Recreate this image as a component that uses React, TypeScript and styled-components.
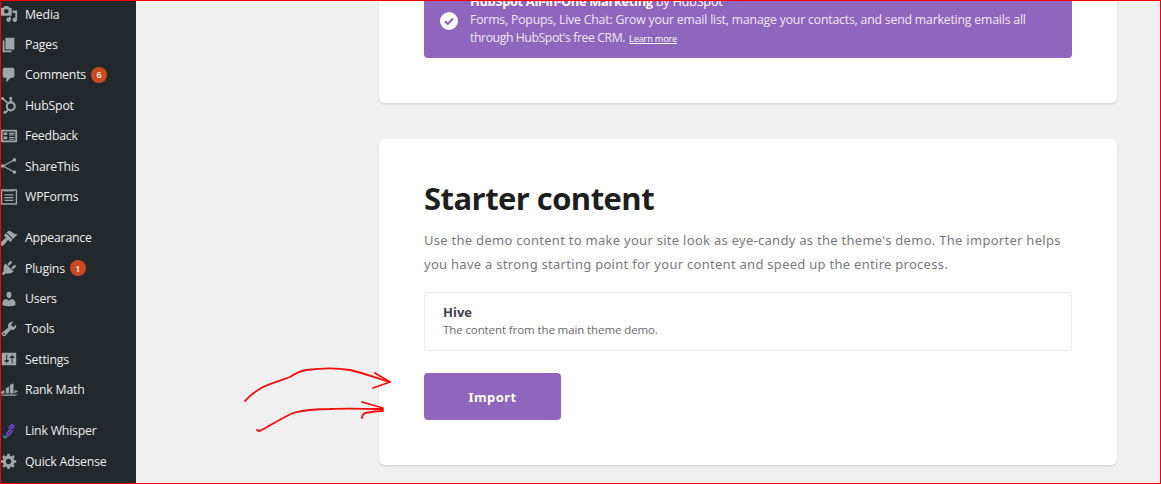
import React from "react";
import styled, { createGlobalStyle } from "styled-components";

const Global = createGlobalStyle`
  html, body { margin: 0; padding: 0; background: #f0f0f0; }
  * { box-sizing: border-box; }
`;

const Shell = styled.div`
  position: relative;
  display: flex;
  width: 1161px;
  height: 484px;
  overflow: hidden;
  background: #f0f0f0;
  font-family: "Open Sans", "Noto Sans", sans-serif;
`;

const Sidebar = styled.nav`
  flex: 0 0 136px;
  height: 484px;
  background: #23282d;
  overflow: hidden;
`;

const MenuList = styled.ul`
  list-style: none;
  margin: -1px 0 0;
  padding: 0;
`;

const MenuItem = styled.li<{ $gap?: boolean }>`
  display: flex;
  align-items: center;
  height: 30.4px;
  margin-top: ${(p) => (p.$gap ? "10.8px" : "0")};
  padding-left: 0;
  color: #eeeeee;
  font-size: 12.3px;
  letter-spacing: -0.2px;
  white-space: nowrap;
`;

const IconSlot = styled.span`
  flex: 0 0 24px;
  display: flex;
  align-items: center;
  justify-content: center;
  padding-right: 7px;
  color: #a0a5aa;
  svg { width: 18px; height: 18px; display: block; flex: none; fill: currentColor; }
`;

const Badge = styled.span`
  display: inline-flex;
  align-items: center;
  justify-content: center;
  width: 16px;
  height: 16px;
  margin-left: 5px;
  border-radius: 50%;
  background: #ca4a1f;
  color: #fff;
  font-size: 9px;
  font-weight: 600;
`;

const Main = styled.main`
  flex: 1;
  padding: 0 44px 0 243px;
`;

const TopCard = styled.section`
  height: 103px;
  padding: 0 45px;
  background: #fff;
  border-radius: 0 0 6px 6px;
  box-shadow: 0 1px 2px rgba(0, 0, 0, 0.14);
`;

const Notice = styled.div`
  display: flex;
  align-items: center;
  gap: 12px;
  height: 58px;
  padding: 0 0 0 16px;
  background: #8f65bd;
  border-radius: 0 0 4px 4px;
  color: #efe8f6;
  font-size: 12.25px;
  line-height: 18.5px;
  overflow: hidden;
`;

const CheckIcon = styled.svg`
  flex: none;
  width: 18px;
  height: 18px;
  margin-top: -17px;
`;

const NoticeText = styled.div`
  flex: 1;
  margin-top: -17px;
  white-space: nowrap;
  letter-spacing: -0.18px;
`;

const NoticeTitle = styled.div`
  color: #fff;
  font-size: 12.8px;
  letter-spacing: -0.3px;
  strong { font-weight: 700; }
`;

const NoticeTight = styled.span`
  letter-spacing: -0.42px;
`;

const LearnMore = styled.a`
  margin-left: 4px;
  color: #fff;
  font-size: 9.2px;
  letter-spacing: -0.18px;
  text-decoration: underline;
`;

const StarterCard = styled.section`
  display: flex;
  flex-direction: column;
  align-items: flex-start;
  height: 326px;
  margin-top: 36px;
  padding: 39px 45px 0;
  background: #fff;
  border-radius: 6px;
  box-shadow: 0 1px 2px rgba(0, 0, 0, 0.14);
`;

const Heading = styled.h2`
  margin: 0;
  color: #1e1e1e;
  font-size: 31px;
  line-height: 40px;
  font-weight: 700;
  letter-spacing: -0.55px;
`;

const Description = styled.p`
  margin: 11px 0 0;
  color: #7b7880;
  font-family: "Noto Sans", "Open Sans", sans-serif;
  font-size: 13px;
  line-height: 23.5px;
  letter-spacing: 0.28px;
  white-space: nowrap;
`;

const ContentBox = styled.div`
  width: 100%;
  height: 59px;
  margin-top: 16px;
  padding: 10px 18px;
  border: 1px solid #ebebeb;
  border-radius: 4px;
  background: #fff;
`;

const BoxTitle = styled.div`
  color: #463d50;
  font-size: 13px;
  line-height: 18px;
  font-weight: 700;
`;

const BoxText = styled.div`
  color: #6c6870;
  font-size: 11.5px;
  line-height: 17px;
  letter-spacing: -0.1px;
`;

const ImportButton = styled.button`
  width: 137px;
  height: 47px;
  margin-top: 22px;
  border: 0;
  border-radius: 4px;
  background: #8f65bd;
  color: #fff;
  font-family: "Noto Sans", "Open Sans", sans-serif;
  font-size: 13px;
  font-weight: 700;
  letter-spacing: 0.4px;
`;

const Annotation = styled.svg`
  position: absolute;
  inset: 0;
  width: 1161px;
  height: 484px;
  pointer-events: none;
`;

const Frame = styled.div`
  position: absolute;
  inset: 0;
  border: 1px solid #f00000;
  pointer-events: none;
`;

const P = ({ d }: { d: string }) => (
  <svg viewBox="0 0 20 20">
    <path d={d} />
  </svg>
);

const HubSpotIcon = () => (
  <svg viewBox="0 0 20 20">
    <circle cx="12" cy="11.5" r="4.4" fill="none" stroke="currentColor" strokeWidth="2.4" />
    <path d="M11 2.5h2v5h-2zM2.2 3.4l1.2-1.5 6.2 5.2-1.4 1.6zM8.5 14.5l1.5 1.4-3 3-1.5-1.4z" />
    <circle cx="2.8" cy="2.8" r="1.6" />
    <circle cx="12" cy="2.4" r="1.5" />
    <circle cx="5.5" cy="18" r="1.7" />
  </svg>
);

const FeedbackIcon = () => (
  <svg viewBox="0 0 20 20">
    <path
      fillRule="evenodd"
      d="M2 3h16a1 1 0 0 1 1 1v12a1 1 0 0 1-1 1H2a1 1 0 0 1-1-1V4a1 1 0 0 1 1-1zm1 2v10h14V5H3zm1 1h4v3H4zm0 4.5h4v3.2H4zm6-4.2h6v1.4h-6zm0 2h6v1.2h-6zm0 2.7h6v1.3h-6zm0 2h6v1.2h-6z"
    />
  </svg>
);

const ShareIcon = () => (
  <svg viewBox="0 0 20 20">
    <path d="M16 3 3.5 10 16 17" fill="none" stroke="currentColor" strokeWidth="1.4" />
    <circle cx="16" cy="3.2" r="2" />
    <circle cx="3" cy="10" r="2" />
    <circle cx="16" cy="16.8" r="2" />
  </svg>
);

const WPFormsIcon = () => (
  <svg viewBox="0 0 20 20">
    <path
      fillRule="evenodd"
      d="M2 1.500h16a1 1 0 0 1 1 1v15a1 1 0 0 1-1 1H2a1 1 0 0 1-1-1v-15a1 1 0 0 1 1-1zm.5 1.600v13.800h15V3.100h-2l-1 1.400-1-1.400-1 1.400-1-1.400-1 1.400-1-1.400-1 1.400-1-1.400-1 1.400-1-1.400-1 1.400-1-1.400zM5 7h10v1.400H5zm0 3h10v1.400H5zm0 3h10v1.400H5z"
    />
  </svg>
);

const RankMathIcon = () => (
  <svg viewBox="0 0 20 20">
    <path d="M0 12.500 5 10v4H0zM6.500 8 10 6v8H6.500zM11 4.500l4-2V14h-4zM16 10l4 1.500-4 2.500zM0 15h20l-3 1.500H3z" />
  </svg>
);

const LinkWhisperIcon = () => (
  <svg viewBox="0 0 20 20">
    <path d="M14 5 8 12.500c-1.500 2 .5 3.500 2 2l4.500-5.500" fill="none" stroke="#6a4bd0" strokeWidth="1.800" />
    <path d="M8 15.500 6.500 17c-1.500 1-3-.5-2-2.500" fill="none" stroke="#2a8fa8" strokeWidth="1.800" />
    <path d="M9.500 7l2.500-3c1.500-1.500 4-.5 3 2l-.5 1" fill="none" stroke="#6a4bd0" strokeWidth="1.800" />
  </svg>
);

const icons = {
  media: <P d="M13 11V4c0-.55-.45-1-1-1h-1.670L9 1H5L3.670 3H2c-.55 0-1 .45-1 1v7c0 .55.45 1 1 1h10c.55 0 1-.45 1-1zM7 4.500c1.380 0 2.500 1.120 2.500 2.500S8.380 9.500 7 9.500 4.500 8.380 4.500 7 5.620 4.500 7 4.500zM14 6h5v10.500c0 1.380-1.120 2.500-2.500 2.500S14 17.880 14 16.500s1.120-2.500 2.500-2.500c.17 0 .34.02.5.05V9h-3V6zm-4 8.050V13h2v3.500c0 1.380-1.120 2.500-2.500 2.500S7 17.880 7 16.500 8.120 14 9.500 14c.17 0 .34.02.5.05z" />,
  pages: <P d="M6 15V2h10v13H6zm-1 1h8v2H3V5h2v11z" />,
  comments: <P d="M5 2h9c1.100 0 2 .9 2 2v7c0 1.100-.9 2-2 2h-2l-5 5v-5H5c-1.100 0-2-.9-2-2V4c0-1.100.9-2 2-2z" />,
  appearance: <P d="M14.500 11 7.400 4l1.500-1.500c.5-.56 2.300-.47 3.500.32 1.200.8 1.430 1.280 2.900 2.100 1.180.64 2.450 1.260 4.450.85zm-.7.700L6.700 4.700 4.900 6.500c-.4.4-.4 1 0 1.400l1.100 1c.4.4.4 1 0 1.400-.6.600-1.400 1.100-2.200 1.700-.35.26-.7.53-1 .84-1.400 1.400-2.400 3-2.400 3.300 0 .9.220 1.500 1.300 2.600h1c.5-.2 2-1.300 3.200-2.700.3-.3.6-.66.86-1 .6-.8 1.100-1.600 1.700-2.200.4-.4 1-.4 1.400 0l1.100 1.100c.4.4 1 .4 1.400 0z" />,
  plugins: <P d="M13.110 4.360L9.870 7.600 8 5.730l3.240-3.240c.35-.34 1.050-.2 1.560.32.52.51.66 1.210.31 1.550zm-8 1.770l.91-1.120 9.010 9.010-1.190.84c-.71.71-2.630 1.160-3.820 1.160H6.140L4.900 17.260c-.59.59-1.540.59-2.120 0-.59-.58-.59-1.530 0-2.120l1.240-1.240v-3.880c0-1.130.4-3.190 1.090-3.890zm7.260 3.970l3.240-3.240c.34-.35 1.040-.21 1.550.31.52.51.66 1.210.31 1.550l-3.240 3.250z" />,
  users: <P d="M10 9.250c-2.270 0-2.730-3.440-2.730-3.440C7 4.020 7.820 2 9.970 2c2.160 0 2.980 2.020 2.710 3.810 0 0-.41 3.440-2.680 3.440zm0 2.570L12.720 10c2.390 0 4.520 2.330 4.520 4.530v2.490s-3.650 1.130-7.240 1.130c-3.650 0-7.240-1.130-7.240-1.130v-2.490c0-2.250 1.940-4.480 4.470-4.480z" />,
  tools: <P d="M16.680 9.770c-1.340 1.340-3.300 1.670-4.950.99l-5.410 6.520c-.99.99-2.590.99-3.580 0s-.99-2.590 0-3.570l6.520-5.420c-.68-1.650-.35-3.610.99-4.950 1.280-1.280 3.120-1.620 4.720-1.060l-2.890 2.890 2.820 2.820 2.860-2.870c.53 1.580.18 3.390-1.080 4.650zM3.810 16.210c.4.39 1.040.39 1.430 0 .4-.4.4-1.040 0-1.430-.39-.4-1.030-.4-1.430 0-.39.39-.39 1.030 0 1.430z" />,
  settings: <P d="M18 16V4c0-.55-.45-1-1-1H3c-.55 0-1 .45-1 1v12c0 .55.45 1 1 1h14c.55 0 1-.45 1-1zM8 11h1c.55 0 1 .45 1 1s-.45 1-1 1H8v1.500c0 .28-.22.5-.5.5s-.5-.22-.5-.5V13H6c-.55 0-1-.45-1-1s.45-1 1-1h1V5.500c0-.28.22-.5.5-.5s.5.22.5.5V11zm5-2h-1c-.55 0-1-.45-1-1s.45-1 1-1h1V5.500c0-.28.22-.5.5-.5s.5.22.5.5V7h1c.55 0 1 .45 1 1s-.45 1-1 1h-1v5.500c0 .28-.22.5-.5.5s-.5-.22-.5-.5V9z" />,
  gear: <P d="M18 12h-2.180c-.17.7-.44 1.350-.81 1.930l1.540 1.540-2.100 2.100-1.540-1.540c-.58.36-1.230.63-1.910.79V19H8v-2.180c-.68-.16-1.330-.43-1.910-.79l-1.540 1.540-2.120-2.120 1.540-1.540c-.36-.58-.63-1.230-.79-1.910H1V9.030h2.170c.16-.7.44-1.350.8-1.940L2.430 5.550l2.100-2.100 1.540 1.540c.58-.37 1.240-.64 1.930-.81V2h3v2.180c.68.16 1.330.43 1.910.79l1.540-1.540 2.120 2.120-1.540 1.540c.36.59.64 1.240.8 1.940H18V12zm-8.500 1.500c1.660 0 3-1.340 3-3s-1.340-3-3-3-3 1.340-3 3 1.340 3 3 3z" />,
};

const menu: { id: string; label: string; icon: React.ReactNode; badge?: string; gap?: boolean }[] = [
  { id: "media", label: "Media", icon: icons.media },
  { id: "pages", label: "Pages", icon: icons.pages },
  { id: "comments", label: "Comments", icon: icons.comments, badge: "6" },
  { id: "hubspot", label: "HubSpot", icon: <HubSpotIcon /> },
  { id: "feedback", label: "Feedback", icon: <FeedbackIcon /> },
  { id: "sharethis", label: "ShareThis", icon: <ShareIcon /> },
  { id: "wpforms", label: "WPForms", icon: <WPFormsIcon /> },
  { id: "appearance", label: "Appearance", icon: icons.appearance, gap: true },
  { id: "plugins", label: "Plugins", icon: icons.plugins, badge: "1" },
  { id: "users", label: "Users", icon: icons.users },
  { id: "tools", label: "Tools", icon: icons.tools },
  { id: "settings", label: "Settings", icon: icons.settings },
  { id: "rankmath", label: "Rank Math", icon: <RankMathIcon /> },
  { id: "linkwhisper", label: "Link Whisper", icon: <LinkWhisperIcon />, gap: true },
  { id: "quickadsense", label: "Quick Adsense", icon: icons.gear },
  { id: "next", label: "", icon: icons.gear },
];

export default function App() {
  return (
    <>
      <Global />
      <Shell>
        <Sidebar>
          <MenuList>
            {menu.map((m) => (
              <MenuItem key={m.id} $gap={m.gap}>
                <IconSlot>{m.icon}</IconSlot>
                {m.label}
                {m.badge && <Badge>{m.badge}</Badge>}
              </MenuItem>
            ))}
          </MenuList>
        </Sidebar>
        <Main>
          <TopCard>
            <Notice>
              <CheckIcon viewBox="0 0 18 18">
                <circle cx="9" cy="9" r="9" fill="#fff" />
                <path d="M5 9.200l2.800 2.800L13 6.500" fill="none" stroke="#8f65bd" strokeWidth="2.200" />
              </CheckIcon>
              <NoticeText>
                <NoticeTitle>
                  <strong>HubSpot All-in-One Marketing</strong> by HubSpot
                </NoticeTitle>
                <div>Forms, Popups, Live Chat: Grow your email list, manage your contacts, and send marketing emails all</div>
                <div>
                  <NoticeTight>through HubSpot's free CRM.</NoticeTight>
                  <LearnMore>Learn more</LearnMore>
                </div>
              </NoticeText>
            </Notice>
          </TopCard>
          <StarterCard>
            <Heading>Starter content</Heading>
            <Description>
              Use the demo content to make your site look as eye-candy as the theme's demo. The importer helps
              <br />
              you have a strong starting point for your content and speed up the entire process.
            </Description>
            <ContentBox>
              <BoxTitle>Hive</BoxTitle>
              <BoxText>The content from the main theme demo.</BoxText>
            </ContentBox>
            <ImportButton>Import</ImportButton>
          </StarterCard>
        </Main>
        <Annotation viewBox="0 0 1161 484" fill="none" stroke="#f20d0d" strokeWidth="1.800" strokeLinecap="round" strokeLinejoin="round">
          <path d="M245 401C250 395 256 391 263 387C272 383 282 380 290 377C296 373 300 371 306 370C322 368 338 368 350 370C364 373 376 378 390 382" />
          <path d="M375 373 390 382 373 388" />
          <path d="M257 430C258 431 259 431 260 431C271 425 282 418 293 413C304 410 318 409 330 409C348 408 366 409 383 409" />
          <path d="M362 402 383 408M383 411C376 411 370 412 365 413C363 414 362 416 362 418" />
        </Annotation>
        <Frame />
      </Shell>
    </>
  );
}
